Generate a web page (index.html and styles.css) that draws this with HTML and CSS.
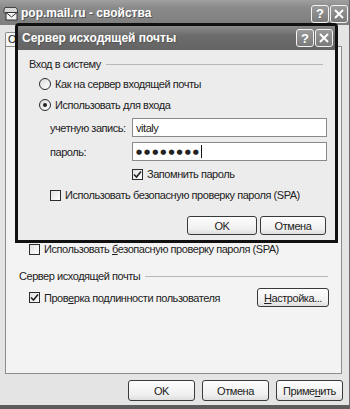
FILE: index.html
```html
<!DOCTYPE html>
<html lang="ru">
<head>
    <meta charset="UTF-8">
    <title>pop.mail.ru - свойства</title>
    <link rel="stylesheet" href="styles.css">
</head>
<body>
    <!-- Окно свойств учетной записи -->
    <div class="win">
        <div class="titlebar">
            <svg class="app-icon" width="16" height="15" viewBox="0 0 16 15">
                <path d="M2 1.5h11l1.5 2.5v3H1V4z" fill="#d8d8d8" stroke="#444"/>
                <rect x="3" y="6.5" width="11" height="7.5" fill="#f4f4f4" stroke="#333"/>
                <path d="M3 6.5l5.5 4.5 5.5-4.5" fill="none" stroke="#333"/>
            </svg>
            <span class="title">pop.mail.ru - свойства</span>
            <span class="cap-btn">?</span>
            <span class="cap-btn close">
                <svg width="10" height="10" viewBox="0 0 10 10"><path d="M1 1l8 8M9 1l-8 8" stroke="#fff" stroke-width="2"/></svg>
            </span>
        </div>

        <div class="win-body">
            <div class="tabs">
                <span class="tab"><span class="tab-text">О</span></span>
            </div>

            <div class="panel">
                <div class="check-row spa-outer">
                    <span class="checkbox"></span>
                    <span>Использовать <u>б</u>езопасную проверку пароля (SPA)</span>
                </div>

                <div class="group-head outgoing">
                    <span>Сервер исходящей почты</span>
                    <span class="group-line"></span>
                </div>

                <div class="auth-row">
                    <div class="check-row">
                        <span class="checkbox checked">
                            <svg width="9" height="9" viewBox="0 0 9 9"><path d="M1 4.5l2.5 2.5 4.5-5.5" fill="none" stroke="#222" stroke-width="1.6"/></svg>
                        </span>
                        <span>Пров<u>е</u>рка подлинности пользователя</span>
                    </div>
                    <span class="btn btn-setup"><u>Н</u>астройка...</span>
                </div>
            </div>

            <div class="btn-row">
                <span class="btn btn-main">OK</span>
                <span class="btn btn-main">Отмена</span>
                <span class="btn btn-main">Приме<u>н</u>ить</span>
            </div>
        </div>
    </div>

    <!-- Диалог поверх окна -->
    <div class="dlg">
        <div class="dlg-title">
            <span class="title">Сервер исходящей почты</span>
            <span class="cap-btn">?</span>
            <span class="cap-btn close">
                <svg width="10" height="10" viewBox="0 0 10 10"><path d="M1 1l8 8M9 1l-8 8" stroke="#fff" stroke-width="2"/></svg>
            </span>
        </div>
        <div class="dlg-body">
            <div class="group-head login">
                <span>Вход в систему</span>
                <span class="group-line"></span>
            </div>

            <div class="radio-row first">
                <span class="radio"></span>
                <span>Как на сервер входящей почты</span>
            </div>
            <div class="radio-row">
                <span class="radio selected"></span>
                <span>Использовать для входа</span>
            </div>

            <div class="field-row first">
                <span class="field-label">учетную запись:</span>
                <span class="input">vitaly</span>
            </div>
            <div class="field-row">
                <span class="field-label">пароль:</span>
                <span class="input"><span class="dots">●●●●●●●●</span><span class="caret"></span></span>
            </div>

            <div class="check-row remember">
                <span class="checkbox checked">
                    <svg width="9" height="9" viewBox="0 0 9 9"><path d="M1 4.5l2.5 2.5 4.5-5.5" fill="none" stroke="#222" stroke-width="1.6"/></svg>
                </span>
                <span>Запомнить пароль</span>
            </div>
            <div class="check-row spa-inner">
                <span class="checkbox"></span>
                <span>Использовать безопасную проверку пароля (SPA)</span>
            </div>

            <div class="dlg-buttons">
                <span class="btn btn-ok">OK</span>
                <span class="btn btn-cancel">Отмена</span>
            </div>
        </div>
    </div>
</body>
</html>
```

FILE: styles.css
```css
* {
    margin: 0;
    padding: 0;
    box-sizing: border-box;
}
html, body {
    width: 350px;
    height: 409px;
    overflow: hidden;
    background: #e4e4e4;
    font-family: "Liberation Sans", Arial, sans-serif;
    font-size: 11px;
    letter-spacing: -0.45px;
    color: #222;
}
u {
    text-decoration: underline;
}

/* Внешнее окно */
.win {
    width: 350px;
    height: 409px;
    display: flex;
    flex-direction: column;
    background: #e4e4e4;
    border-right: 1px solid #6a6a6a;
    border-bottom: 4px solid #5c5c5c;
}
.titlebar {
    height: 25px;
    display: flex;
    align-items: center;
    padding: 0 1px 0 3px;
    background: linear-gradient(#a0a0a0, #8a8a8a 30%, #7e7e7e);
}
.app-icon {
    flex: none;
    margin-top: 2px;
}
.title {
    flex: 1;
    color: #fff;
    font-weight: bold;
    font-size: 12px;
    letter-spacing: 0;
    margin-left: 2px;
    text-shadow: 1px 1px 0 #555;
}
.cap-btn {
    width: 18px;
    height: 18px;
    margin-left: 1px;
    border: 1px solid #f2f2f2;
    border-radius: 3px;
    background: linear-gradient(#9a9a9a, #7a7a7a);
    color: #fff;
    font-weight: bold;
    font-size: 13px;
    letter-spacing: 0;
    display: flex;
    align-items: center;
    justify-content: center;
}
.titlebar .cap-btn {
    margin-top: 2px;
}

.win-body {
    flex: 1;
    display: flex;
    flex-direction: column;
}
.tabs {
    height: 14px;
    margin-top: 7px;
    padding-left: 5px;
    display: flex;
}
.tab {
    width: 40px;
    border: 1px solid #8c8c8c;
    border-bottom: none;
    border-radius: 2px 2px 0 0;
    background: #f6f6f6;
    padding-left: 2px;
    line-height: 13px;
}
.tab-text {
    display: inline-block;
    width: 7px;
    overflow: hidden;
}
.panel {
    width: 337px;
    height: 328px;
    margin-left: 5px;
    border: 1px solid #8c8c8c;
    background: #f3f3f3;
    padding-top: 195px;
}

.check-row, .radio-row {
    height: 14px;
    display: flex;
    align-items: center;
    gap: 4px;
}
.checkbox {
    flex: none;
    width: 11px;
    height: 11px;
    border: 1px solid #2c2c2c;
    background: linear-gradient(135deg, #e2e2e2, #fff);
    display: flex;
    align-items: center;
    justify-content: center;
}
.radio {
    flex: none;
    width: 12px;
    height: 12px;
    border: 1px solid #2c2c2c;
    border-radius: 50%;
    background: linear-gradient(135deg, #dcdcdc, #fff);
    display: flex;
    align-items: center;
    justify-content: center;
}
.radio.selected::after {
    content: "";
    width: 4px;
    height: 4px;
    border-radius: 50%;
    background: #222;
}

.spa-outer {
    margin-left: 23px;
}
.group-head {
    height: 14px;
    display: flex;
    align-items: center;
    gap: 5px;
}
.group-line {
    flex: 1;
    height: 1px;
    background: #b8b8b8;
}
.outgoing {
    margin: 13px 13px 0 13px;
}
.auth-row {
    height: 19px;
    margin: 5px 12px 0 23px;
    display: flex;
    align-items: center;
    justify-content: space-between;
}

.btn {
    height: 21px;
    border: 1px solid #3a3a3a;
    border-radius: 3px;
    background: linear-gradient(#fdfdfd, #f0f0f0 70%, #dedede);
    display: flex;
    align-items: center;
    justify-content: center;
}
.btn-setup {
    width: 72px;
    height: 19px;
}
.btn-row {
    display: flex;
    justify-content: flex-end;
    gap: 7px;
    margin: 6px 6px 0 0;
}
.btn-main {
    width: 67px;
}

/* Диалог "Сервер исходящей почты" */
.dlg {
    position: absolute;
    left: 15px;
    top: 23px;
    width: 323px;
    height: 220px;
    border: 3px solid #111;
    border-radius: 4px 4px 0 0;
    display: flex;
    flex-direction: column;
}
.dlg-title {
    height: 24px;
    display: flex;
    align-items: center;
    padding: 0 2px 0 2px;
    background: linear-gradient(#8a8a8a, #6c6c6c 40%, #646464);
}
.dlg-title .title {
    font-size: 12px;
    margin-left: 2px;
}
.dlg-body {
    flex: 1;
    background: #ececec;
    padding-top: 7px;
}
.login {
    margin: 0 12px 0 11px;
}
.radio-row {
    margin: 7px 0 0 21px;
}
.radio-row.first {
    margin-top: 6px;
}
.field-row {
    height: 19px;
    margin: 5px 8px 0 32px;
    display: flex;
    align-items: center;
}
.field-row.first {
    margin-top: 6px;
}
.field-label {
    width: 82px;
    white-space: nowrap;
}
.input {
    flex: 1;
    height: 19px;
    border: 1px solid #8a8a8a;
    background: #fff;
    padding-left: 3px;
    display: flex;
    align-items: center;
}
.dots {
    font-family: "DejaVu Sans", sans-serif;
    font-size: 7px;
    letter-spacing: 2px;
}
.caret {
    width: 1px;
    height: 13px;
    background: #111;
}
.remember {
    margin: 6px 0 0 114px;
}
.spa-inner {
    margin: 7px 0 0 32px;
}
.dlg-buttons {
    display: flex;
    justify-content: flex-end;
    gap: 3px;
    margin: 14px 9px 0 0;
}
.btn-ok {
    width: 70px;
    height: 19px;
}
.btn-cancel {
    width: 66px;
    height: 19px;
}
```
